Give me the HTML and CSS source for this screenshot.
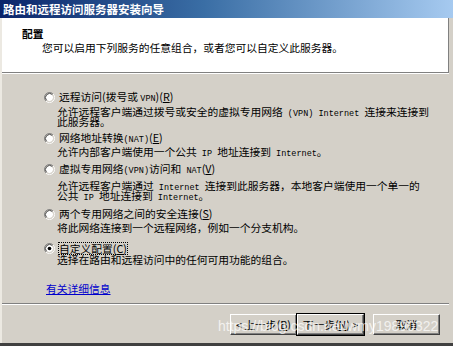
FILE: index.html
```html
<!DOCTYPE html>
<html lang="zh-CN">
<head>
<meta charset="utf-8">
<title>路由和远程访问服务器安装向导</title>
<link rel="stylesheet" href="styles.css">
</head>
<body>
<div class="window">
  <div class="titlebar"><span class="title">路由和远程访问服务器安装向导</span></div>
  <div class="frame">
    <div class="header">
      <div class="h-title">配置</div>
      <div class="h-sub">您可以启用下列服务的任意组合，或者您可以自定义此服务器。</div>
    </div>
    <div class="content">
      <div class="opt o1">
        <div class="opt-label">
          <svg class="radio" width="11" height="11" viewBox="0 0 12 12"><circle cx="6" cy="6" r="4.2" fill="#fff"/><path d="M2.11 9.89A5.5 5.5 0 0 1 9.89 2.11" fill="none" stroke="#808080"/><path d="M9.89 2.11A5.5 5.5 0 0 1 2.11 9.89" fill="none" stroke="#fff"/><path d="M2.82 9.18A4.5 4.5 0 0 1 9.18 2.82" fill="none" stroke="#404040"/><path d="M9.18 2.82A4.5 4.5 0 0 1 2.82 9.18" fill="none" stroke="#d4d0c8"/></svg>
          <span class="lbl">远程访问(拨号或 <span class="en">VPN</span>)(<u>R</u>)</span>
        </div>
        <div class="desc">
          <div class="line">允许远程客户端通过拨号或安全的虚拟专用网络<span class="en"> (VPN) Internet </span>连接来连接到</div>
          <div class="line">此服务器。</div>
        </div>
      </div>
      <div class="opt o2">
        <div class="opt-label">
          <svg class="radio" width="11" height="11" viewBox="0 0 12 12"><circle cx="6" cy="6" r="4.2" fill="#fff"/><path d="M2.11 9.89A5.5 5.5 0 0 1 9.89 2.11" fill="none" stroke="#808080"/><path d="M9.89 2.11A5.5 5.5 0 0 1 2.11 9.89" fill="none" stroke="#fff"/><path d="M2.82 9.18A4.5 4.5 0 0 1 9.18 2.82" fill="none" stroke="#404040"/><path d="M9.18 2.82A4.5 4.5 0 0 1 2.82 9.18" fill="none" stroke="#d4d0c8"/></svg>
          <span class="lbl">网络地址转换<span class="en">(NAT)</span>(<u>E</u>)</span>
        </div>
        <div class="desc">
          <div class="line">允许内部客户端使用一个公共<span class="en"> IP </span>地址连接到<span class="en"> Internet</span>。</div>
        </div>
      </div>
      <div class="opt o3">
        <div class="opt-label">
          <svg class="radio" width="11" height="11" viewBox="0 0 12 12"><circle cx="6" cy="6" r="4.2" fill="#fff"/><path d="M2.11 9.89A5.5 5.5 0 0 1 9.89 2.11" fill="none" stroke="#808080"/><path d="M9.89 2.11A5.5 5.5 0 0 1 2.11 9.89" fill="none" stroke="#fff"/><path d="M2.82 9.18A4.5 4.5 0 0 1 9.18 2.82" fill="none" stroke="#404040"/><path d="M9.18 2.82A4.5 4.5 0 0 1 2.82 9.18" fill="none" stroke="#d4d0c8"/></svg>
          <span class="lbl">虚拟专用网络<span class="en">(VPN)</span>访问和<span class="en"> NAT</span>(<u>V</u>)</span>
        </div>
        <div class="desc">
          <div class="line">允许远程客户端通过<span class="en"> Internet </span>连接到此服务器，本地客户端使用一个单一的</div>
          <div class="line">公共<span class="en"> IP </span>地址连接到<span class="en"> Internet</span>。</div>
        </div>
      </div>
      <div class="opt o4">
        <div class="opt-label">
          <svg class="radio" width="11" height="11" viewBox="0 0 12 12"><circle cx="6" cy="6" r="4.2" fill="#fff"/><path d="M2.11 9.89A5.5 5.5 0 0 1 9.89 2.11" fill="none" stroke="#808080"/><path d="M9.89 2.11A5.5 5.5 0 0 1 2.11 9.89" fill="none" stroke="#fff"/><path d="M2.82 9.18A4.5 4.5 0 0 1 9.18 2.82" fill="none" stroke="#404040"/><path d="M9.18 2.82A4.5 4.5 0 0 1 2.82 9.18" fill="none" stroke="#d4d0c8"/></svg>
          <span class="lbl">两个专用网络之间的安全连接(<u>S</u>)</span>
        </div>
        <div class="desc">
          <div class="line">将此网络连接到一个远程网络，例如一个分支机构。</div>
        </div>
      </div>
      <div class="opt o5">
        <div class="opt-label">
          <svg class="radio" width="11" height="11" viewBox="0 0 12 12"><circle cx="6" cy="6" r="4.2" fill="#fff"/><path d="M2.11 9.89A5.5 5.5 0 0 1 9.89 2.11" fill="none" stroke="#808080"/><path d="M9.89 2.11A5.5 5.5 0 0 1 2.11 9.89" fill="none" stroke="#fff"/><path d="M2.82 9.18A4.5 4.5 0 0 1 9.18 2.82" fill="none" stroke="#404040"/><path d="M9.18 2.82A4.5 4.5 0 0 1 2.82 9.18" fill="none" stroke="#d4d0c8"/><circle cx="6" cy="6" r="2" fill="#000"/></svg>
          <span class="lbl focus">自定义配置(<u>C</u>)</span>
        </div>
        <div class="desc">
          <div class="line">选择在路由和远程访问中的任何可用功能的组合。</div>
        </div>
      </div>
      <a class="more" href="#">有关详细信息</a>
    </div>
    <div class="sep"></div>
    <div class="buttons">
      <div class="pair">
        <button class="btn">&lt; 上一步(<u>B</u>)</button>
        <button class="btn default">下一步(<u>N</u>) &gt;</button>
      </div>
      <button class="btn cancel">取消</button>
    </div>
  </div>
  <div class="watermark">https://blog.csdn.net/wmy19890322</div>
</div>
</body>
</html>
```

FILE: styles.css
```css
* { box-sizing: border-box; }
html, body {
  margin: 0;
  padding: 0;
  width: 453px;
  height: 346px;
  overflow: hidden;
  background: #d4d0c8;
}
body {
  font-family: "Noto Sans CJK SC", "Liberation Sans", sans-serif;
  font-size: 10.75px;
  color: #000;
}
.window {
  position: relative;
  width: 453px;
  height: 346px;
  display: flex;
  flex-direction: column;
  border-bottom: 3px solid #404040;
}
.titlebar {
  height: 18px;
  flex: none;
  background: linear-gradient(to right, #0a246a 0%, #3a6ea5 45%, #a6caf0 100%);
  display: flex;
  align-items: center;
  padding-left: 3px;
}
.title {
  color: #fff;
  font-weight: bold;
  font-size: 11.5px;
  line-height: 14px;
}
.frame {
  flex: 1;
  display: flex;
  flex-direction: column;
  border-left: 2px solid #ece9e2;
  padding-right: 4px;
}
.header {
  height: 55px;
  flex: none;
  background: #fff;
  border-right: 1px solid #808080;
  border-bottom: 1px solid #808080;
  box-shadow: 0 1px 0 #fff;
  padding: 9px 0 0 20px;
}
.h-title {
  font-weight: bold;
  line-height: 14px;
}
.h-sub {
  line-height: 14px;
  padding-left: 20px;
}
.content {
  display: flex;
  flex-direction: column;
  align-items: flex-start;
  padding: 17px 0 0 42px;
}
.en {
  font-family: "Liberation Mono", monospace;
  font-size: 8.5px;
  line-height: 0;
}
.opt-label {
  display: flex;
  align-items: center;
  height: 14px;
  line-height: 14px;
}
.radio {
  flex: none;
  margin-right: 3px;
}
.lbl {
  white-space: nowrap;
  padding: 0 1px;
}
.lbl.focus {
  outline: 1px dotted #000;
  outline-offset: -1px;
  line-height: 13px;
}
.desc {
  padding-left: 13px;
  margin-top: 3px;
}
.line {
  height: 10px;
  line-height: 10px;
  white-space: nowrap;
}
.o2 { margin-top: 4px; }
.o2 .desc { margin-top: 2px; }
.o3 { margin-top: 5px; }
.o3 .desc { margin-top: 5px; }
.o4 { margin-top: 6px; }
.o4 .desc { margin-top: 2px; }
.o5 { margin-top: 8px; }
.o5 .desc { margin-top: 0; }
.more {
  margin-top: 17px;
  margin-left: 2px;
  line-height: 14px;
  color: #0000cc;
  text-decoration: underline;
}
.sep {
  margin-top: 7px;
  height: 2px;
  flex: none;
  border-top: 1px solid #808080;
  border-bottom: 1px solid #fff;
}
.buttons {
  margin-top: 9px;
  display: flex;
  justify-content: flex-end;
  align-items: flex-start;
  gap: 9px;
  padding-right: 9px;
}
.pair {
  display: flex;
}
.btn {
  width: 67px;
  height: 21px;
  padding: 0;
  font-family: "Noto Sans CJK SC", "Liberation Sans", sans-serif;
  font-size: 10.75px;
  line-height: 14px;
  color: #000;
  background: #d4d0c8;
  border: 1px solid;
  border-color: #fff #404040 #404040 #fff;
  box-shadow: inset -1px -1px 0 #808080;
}
.btn.default {
  outline: 1px solid #000;
  outline-offset: 0;
}
.watermark {
  position: absolute;
  left: 218px;
  top: 318px;
  font-family: "Liberation Sans", sans-serif;
  font-size: 14px;
  line-height: 16px;
  color: rgba(255, 255, 255, 0.72);
  white-space: nowrap;
  pointer-events: none;
}
```
